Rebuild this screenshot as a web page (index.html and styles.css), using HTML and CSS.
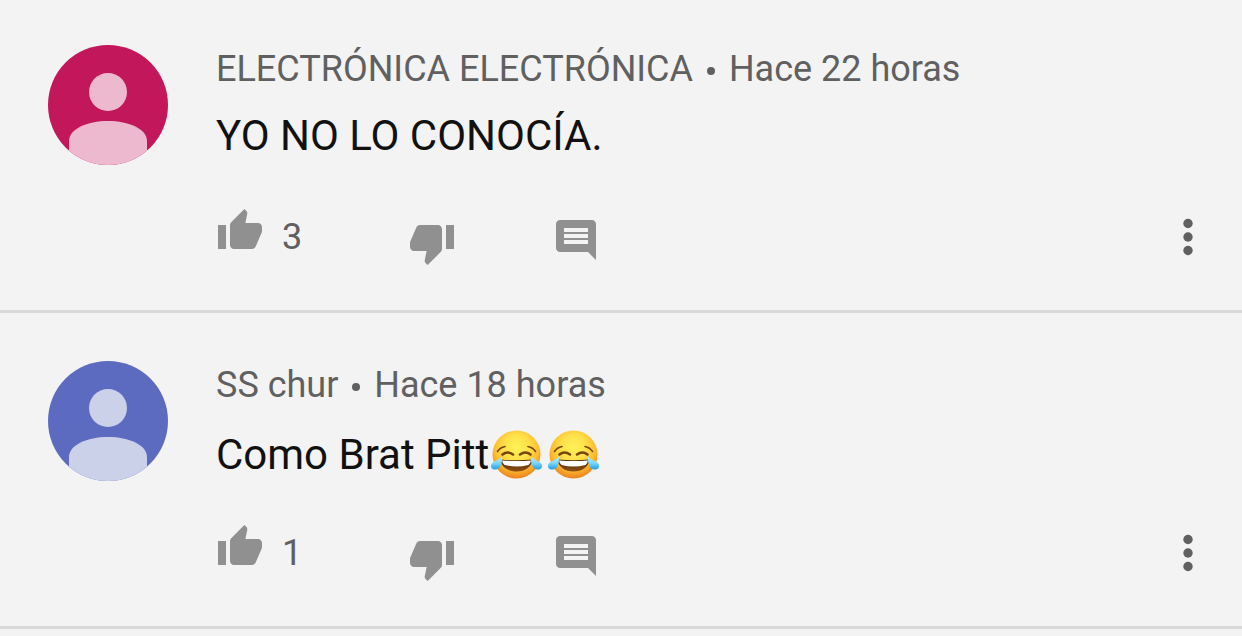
FILE: index.html
```html
<!DOCTYPE html>
<html lang="es">
<head>
    <meta charset="UTF-8">
    <meta name="viewport" content="width=device-width, initial-scale=1.0">
    <title>Comentarios</title>
    <link rel="stylesheet" href="styles.css">
</head>
<body>

    <!-- Shared icons -->
    <svg class="sprite" aria-hidden="true">
        <defs>
            <radialGradient id="face" cx="50%" cy="36%" r="66%">
                <stop offset="0" stop-color="#fff256"/>
                <stop offset="0.4" stop-color="#ffe14a"/>
                <stop offset="0.7" stop-color="#fdbc30"/>
                <stop offset="1" stop-color="#ea7a1c"/>
            </radialGradient>
            <linearGradient id="mouth" x1="0" y1="0" x2="0" y2="1">
                <stop offset="0" stop-color="#4a2808"/>
                <stop offset="1" stop-color="#8f4f14"/>
            </linearGradient>
            <linearGradient id="tear" x1="0" y1="0" x2="0" y2="1">
                <stop offset="0" stop-color="#b4ecff"/>
                <stop offset="0.5" stop-color="#7dd6fa"/>
                <stop offset="1" stop-color="#1d9fe8"/>
            </linearGradient>
        </defs>
        <symbol id="icon-person" viewBox="0 0 120 120">
            <circle cx="60" cy="47" r="19"/>
            <path d="M21 120V96C21 84 39 76 60 76s39 8 39 20v24z"/>
        </symbol>
        <symbol id="icon-like" viewBox="0 0 24 24">
            <path d="M1 21h4V9H1v12zm22-11c0-1.1-.9-2-2-2h-6.31l.95-4.57.03-.32c0-.41-.17-.79-.44-1.06L14.17 1 7.59 7.59C7.22 7.95 7 8.45 7 9v10c0 1.1.9 2 2 2h9c.83 0 1.54-.5 1.84-1.22l3.02-7.05c.09-.23.14-.47.14-.73v-2z"/>
        </symbol>
        <symbol id="icon-dislike" viewBox="0 0 24 24">
            <path d="M15 3H6c-.83 0-1.54.5-1.84 1.22l-3.02 7.05c-.09.23-.14.47-.14.73v2c0 1.1.9 2 2 2h6.31l-.95 4.57-.03.32c0 .41.17.79.44 1.06L9.83 23l6.59-6.59c.36-.36.58-.86.58-1.41V5c0-1.1-.9-2-2-2zm4 0v12h4V3h-4z"/>
        </symbol>
        <symbol id="icon-reply" viewBox="0 0 24 24">
            <path d="M21.99 4c0-1.1-.89-2-1.99-2H4c-1.1 0-2 .9-2 2v12c0 1.1.9 2 2 2h14l4 4-.01-18zM18 14H6v-2h12v2zm0-3H6V9h12v2zm0-3H6V6h12v2z"/>
        </symbol>
        <symbol id="icon-more" viewBox="0 0 48 48">
            <circle cx="24" cy="10.5" r="4.7"/>
            <circle cx="24" cy="24" r="4.7"/>
            <circle cx="24" cy="37.5" r="4.7"/>
        </symbol>
        <symbol id="emoji-joy" viewBox="0 0 57 50">
            <circle cx="27.5" cy="24.500" r="24" fill="url(#face)"/>
            <g fill="none" stroke="#7a4510" stroke-linecap="round">
                <path d="M8.500 21.500Q11 17.500 16 16.500M46.500 21.500Q44 17.500 39 16.500" stroke-width="1.600"/>
                <path d="M13.500 24.500Q18.500 20.500 24 24.500M31 24.500Q36.500 20.500 41.500 24.500" stroke-width="2.600"/>
            </g>
            <path d="M11.500 29.500Q27.500 31 43.500 29.500C43 37 36 41.500 27.500 41.500S12 37 11.500 29.500z" fill="url(#mouth)"/>
            <path d="M13 30.500Q27.500 31.500 42 30.500Q41.500 33.500 39.500 35Q27.500 38 15.500 35Q13.500 33.500 13 30.500z" fill="#fff"/>
            <path d="M13 26.500C13.500 33 11.500 39 7 39.500C2.500 40 1 36.500 2.500 34C4 31 9.500 30.500 13 26.500z" fill="url(#tear)"/>
            <path d="M42 26.500C41.500 33 43.500 39 48 39.500C52.500 40 54 36.500 52.500 34C51 31 45.500 30.500 42 26.500z" fill="url(#tear)"/>
        </symbol>
    </svg>

    <main class="comments">
        <article class="comment">
            <svg class="avatar avatar-pink" aria-hidden="true"><use href="#icon-person"/></svg>
            <div class="content">
                <p class="meta">ELECTRÓNICA ELECTRÓNICA <span class="dot"></span> Hace 22 horas</p>
                <p class="text">YO NO LO CONOCÍA.</p>
                <div class="actions">
                    <button class="like" aria-label="Me gusta: 3">
                        <svg class="icon"><use href="#icon-like"/></svg>
                        <span class="count">3</span>
                    </button>
                    <button class="dislike" aria-label="No me gusta">
                        <svg class="icon"><use href="#icon-dislike"/></svg>
                    </button>
                    <button class="reply" aria-label="Responder">
                        <svg class="icon"><use href="#icon-reply"/></svg>
                    </button>
                    <button class="more" aria-label="Más opciones">
                        <svg class="icon"><use href="#icon-more"/></svg>
                    </button>
                </div>
            </div>
        </article>

        <article class="comment">
            <svg class="avatar avatar-blue" aria-hidden="true"><use href="#icon-person"/></svg>
            <div class="content">
                <p class="meta">SS chur <span class="dot"></span> Hace 18 horas</p>
                <p class="text text-emoji">Como Brat Pitt<svg class="emoji" role="img" aria-label="😂"><use href="#emoji-joy"/></svg><svg class="emoji" role="img" aria-label="😂"><use href="#emoji-joy"/></svg></p>
                <div class="actions">
                    <button class="like" aria-label="Me gusta: 1">
                        <svg class="icon"><use href="#icon-like"/></svg>
                        <span class="count">1</span>
                    </button>
                    <button class="dislike" aria-label="No me gusta">
                        <svg class="icon"><use href="#icon-dislike"/></svg>
                    </button>
                    <button class="reply" aria-label="Responder">
                        <svg class="icon"><use href="#icon-reply"/></svg>
                    </button>
                    <button class="more" aria-label="Más opciones">
                        <svg class="icon"><use href="#icon-more"/></svg>
                    </button>
                </div>
            </div>
        </article>
    </main>

</body>
</html>
```
FILE: styles.css
```css
* {
    box-sizing: border-box;
}
body {
    margin: 0;
    font-family: Roboto, Arial, sans-serif;
    background-color: #f3f3f3;
    color: #111;
}
.sprite {
    position: absolute;
    width: 0;
    height: 0;
}
.comment {
    display: flex;
    gap: 48px;
    padding: 48px 30px 43px 48px;
    border-bottom: 3px solid #d9d9d9;
}
.comment:first-child {
    padding-top: 45px;
}
.avatar {
    flex: none;
    width: 120px;
    height: 120px;
    border-radius: 50%;
}
.avatar-pink {
    background-color: #c2185b;
    fill: #edb9ce;
}
.avatar-blue {
    background-color: #5c6bc0;
    fill: #ccd1ea;
}
.content {
    flex: 1;
    min-width: 0;
}
.meta {
    margin: 0;
    font-size: 36px;
    line-height: 48px;
    color: #606060;
}
.dot {
    display: inline-block;
    width: 8px;
    height: 8px;
    margin: 0 5px;
    border-radius: 50%;
    background-color: #606060;
    vertical-align: 6px;
}
.text {
    display: flex;
    align-items: center;
    margin: 12px 0 40px;
    font-size: 42px;
    line-height: 62px;
}
.text-emoji {
    margin-bottom: 34px;
    line-height: 68px;
}
.emoji {
    width: 57px;
    height: 50px;
}
.actions {
    display: flex;
    height: 60px;
}
button {
    display: flex;
    padding: 0;
    border: none;
    background: none;
    font-family: inherit;
    color: #606060;
    cursor: pointer;
}
.icon {
    width: 48px;
    height: 48px;
    fill: #909090;
}
.like {
    width: 192px;
    gap: 18px;
}
.count {
    font-size: 36px;
    line-height: 60px;
}
.dislike {
    width: 144px;
    align-items: flex-end;
}
.reply {
    padding-top: 9px;
}
.more {
    margin-left: auto;
    align-items: center;
}
.more .icon {
    fill: #606060;
}
```
